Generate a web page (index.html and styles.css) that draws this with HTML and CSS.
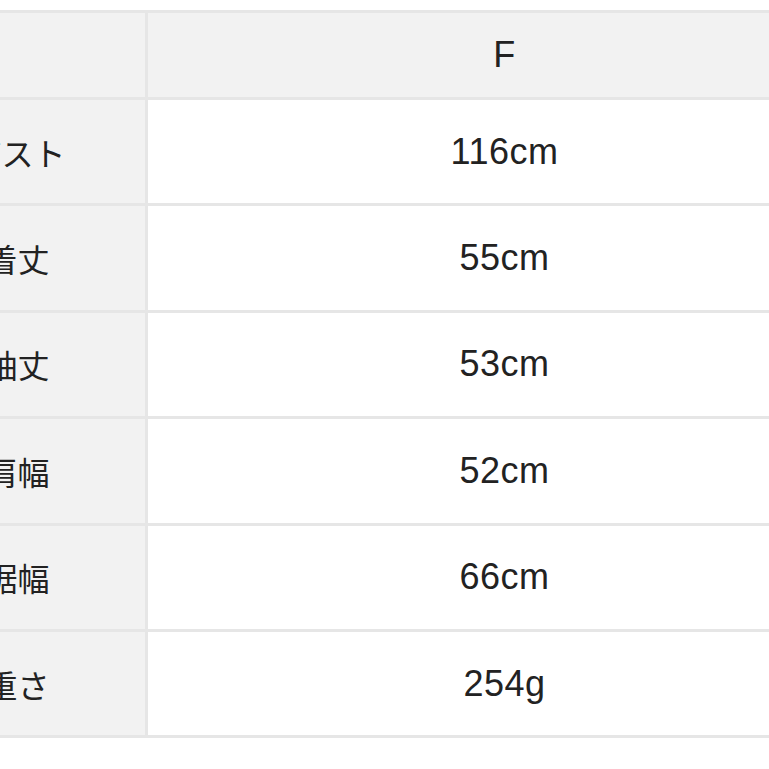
FILE: index.html
```html
<!DOCTYPE html>
<html lang="ja">
<head>
<meta charset="utf-8">
<title>サイズ表</title>
<link rel="stylesheet" href="styles.css">
</head>
<body>
<div class="viewport">
  <div class="size-table">
    <div class="cell head label"></div>
    <div class="cell head value">F</div>
    <div class="cell label">バスト</div>
    <div class="cell value">116cm</div>
    <div class="cell label">着丈</div>
    <div class="cell value">55cm</div>
    <div class="cell label">袖丈</div>
    <div class="cell value">53cm</div>
    <div class="cell label">肩幅</div>
    <div class="cell value">52cm</div>
    <div class="cell label">裾幅</div>
    <div class="cell value">66cm</div>
    <div class="cell label">重さ</div>
    <div class="cell value">254g</div>
  </div>
</div>
</body>
</html>
```
FILE: styles.css
```css
html, body {
  margin: 0;
  padding: 0;
  background: #ffffff;
}
.viewport {
  width: 769px;
  height: 769px;
  overflow: hidden;
  padding-top: 10px;
  box-sizing: border-box;
}
.size-table {
  display: grid;
  grid-template-columns: 255px 713px;
  grid-template-rows: 84px repeat(6, 103.4px);
  gap: 3px;
  padding: 3px 0;
  background: #e6e6e6;
  margin-left: -110px;
  width: 971px;
  font-family: "Liberation Sans", "Noto Sans CJK JP", sans-serif;
  color: #222222;
}
.cell {
  display: flex;
  align-items: center;
  justify-content: center;
  background: #ffffff;
}
.label {
  background: #f2f2f2;
  font-family: "Noto Sans CJK JP", sans-serif;
  font-size: 32px;
}
.value {
  font-size: 36px;
  letter-spacing: 0.5px;
}
.head {
  background: #f2f2f2;
}
```
